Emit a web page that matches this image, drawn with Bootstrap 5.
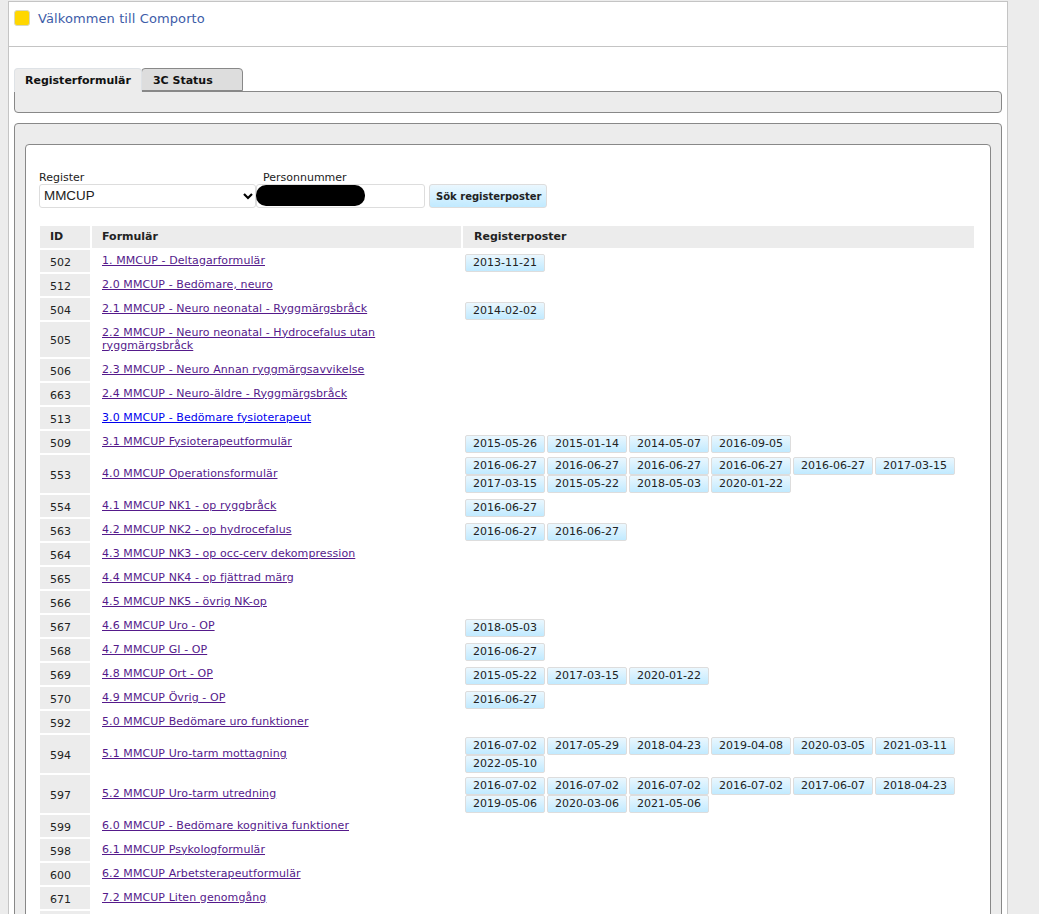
<!DOCTYPE html>
<html lang="sv">
<head>
<meta charset="utf-8">
<title>Comporto</title>
<link href="https://cdn.jsdelivr.net/npm/bootstrap@5.3.0/dist/css/bootstrap.min.css" rel="stylesheet">
<style>
html,body{height:914px;overflow:hidden}
body{background:#ececec;font:11px/13px "DejaVu Sans",Verdana,sans-serif;color:#222}
.sheet{width:1000px;margin-left:8px;background:#fff;border:1px solid #c4c4c4;border-bottom:0;margin-top:1px;height:1200px;padding:0}
.topbar{height:45px;border-bottom:1px solid #c4c4c4;display:flex;gap:8px;padding:8px 5px;color:#3d5ca8;font-size:13px;line-height:18px;letter-spacing:.1px}
.logo-sq{width:16px;height:16px;background:#ffd700;border:1px solid #d8d8c0;border-radius:3px}
.tabrow{margin:21px 5px 0 5px}
.tabrow .nav-link{font-weight:700;font-size:11px;line-height:13px;color:#111;border:1px solid #888;border-radius:4px 4px 0 0;padding:5px 10px;height:23px;background:#ddd;margin:0}
.tabrow .nav-tabs{border:0;gap:0}
.tabrow .nav-link.active{background:#ececec;color:#111;border-bottom-color:#ececec;position:relative;z-index:1;height:24px}
.tabrow .nav-link.other{padding:5px 29px 5px 11px;border-left:1px solid #888;margin-left:-1px}
.tabbody{height:22px;background:#ececec;border:1px solid #888;border-radius:0 4px 4px 4px;margin-top:-1px}
.outer-panel{margin:10px 5px 0 5px;background:#ececec;border:1px solid #888;border-radius:4px;padding:20px 10px;height:1000px}
.inner-panel{background:#fff;border:1px solid #888;border-radius:4px;padding:27px 13px 0 13px;height:960px}
.searchform{display:flex;align-items:flex-end;position:relative;height:36px}
.searchform label{display:block;font-size:11px;line-height:12px;color:#222}
.searchform .form-select{width:217px;height:24px;padding:0 4px;font:13.4px/20px "Liberation Sans",sans-serif;color:#222;border:1px solid #ddd;border-radius:3px;background-image:url("data:image/svg+xml,%3csvg xmlns='http://www.w3.org/2000/svg' viewBox='0 0 10 7'%3e%3cpath fill='none' stroke='%23000' stroke-width='2.2' d='M1 1l4 4 4-4'/%3e%3c/svg%3e");background-position:right 2px center;background-size:10px 7px}
.searchform .form-control{height:24px;padding:0 4px;border:1px solid #ddd;border-radius:3px}
.redact{position:absolute;left:217px;top:13px;width:109px;height:21px;background:#000;border-radius:10px}
.pnr{margin-left:7px}
.pnr .form-control{margin-left:-7px;width:169px}
.btn-find{font-weight:700;font-size:10px;line-height:13px;color:#222;padding:4px 5px 4px 6px;height:24px;border:1px solid #ddd;border-radius:3px;background:linear-gradient(#eaf7fe,#c1eaff);margin-left:4px}
.regtable{width:938px;margin:16px 0 0 -1px;border-collapse:separate;border-spacing:2px;table-layout:fixed}
.regtable th{background:#ececec;font-weight:700;height:22px;padding:0 10px 2px;color:#222;font-size:11px}
.regtable th:last-child{padding-left:11px}
.regtable td{height:22px;padding:0;vertical-align:middle}
.regtable tr.tallrow td{height:35px}
.regtable td.rid{background:#ececec;padding:2px 0 0 10px;color:#222}
.regtable td.rform{padding:0 10px 2px 10px;letter-spacing:.08px}
.regtable td.rdates{padding:2px 2px 0;vertical-align:bottom}
.regtable a{color:#551a8b}
.regtable a.fresh{color:#0000ee}
.datewrap{display:flex;flex-wrap:wrap;column-gap:2px}
.datebtn{display:block;width:80px;height:18px;padding:0;font:11px/16px "DejaVu Sans",Verdana,sans-serif;text-align:center;color:#222;border:1px solid #ddd;border-radius:2px;background:linear-gradient(#eaf7fe,#c1eaff)}
</style>
</head>
<body>
<div class="sheet">
  <div class="topbar"><span class="logo-sq"></span><span>Välkommen till Comporto</span></div>
  <div class="tabrow">
    <ul class="nav nav-tabs">
      <li class="nav-item"><a class="nav-link active" href="#">Registerformulär</a></li>
      <li class="nav-item"><a class="nav-link other" href="#">3C Status</a></li>
    </ul>
    <div class="tabbody"></div>
  </div>
  <div class="outer-panel">
    <div class="inner-panel">
      <form class="searchform">
        <div><label for="reg">Register</label>
          <select id="reg" class="form-select"><option>MMCUP</option></select></div>
        <div class="pnr"><label for="pnr">Personnummer</label>
          <input id="pnr" class="form-control" type="text"></div>
        <span class="redact"></span>
        <button type="button" class="btn btn-find">Sök registerposter</button>
      </form>
      <table class="regtable">
        <colgroup><col style="width:50px"><col style="width:369px"><col></colgroup>
        <thead><tr><th>ID</th><th>Formulär</th><th>Registerposter</th></tr></thead>
        <tbody id="rows"></tbody>
      </table>
    </div>
  </div>
</div>
<script>
var d=[
[502,"1. MMCUP - Deltagarformulär",["2013-11-21"]],
[512,"2.0 MMCUP - Bedömare, neuro",[]],
[504,"2.1 MMCUP - Neuro neonatal - Ryggmärgsbråck",["2014-02-02"]],
[505,"2.2 MMCUP - Neuro neonatal - Hydrocefalus utan ryggmärgsbråck",[],0,1],
[506,"2.3 MMCUP - Neuro Annan ryggmärgsavvikelse",[]],
[663,"2.4 MMCUP - Neuro-äldre - Ryggmärgsbråck",[]],
[513,"3.0 MMCUP - Bedömare fysioterapeut",[],1],
[509,"3.1 MMCUP Fysioterapeutformulär",["2015-05-26","2015-01-14","2014-05-07","2016-09-05"]],
[553,"4.0 MMCUP Operationsformulär",["2016-06-27","2016-06-27","2016-06-27","2016-06-27","2016-06-27","2017-03-15","2017-03-15","2015-05-22","2018-05-03","2020-01-22"]],
[554,"4.1 MMCUP NK1 - op ryggbråck",["2016-06-27"]],
[563,"4.2 MMCUP NK2 - op hydrocefalus",["2016-06-27","2016-06-27"]],
[564,"4.3 MMCUP NK3 - op occ-cerv dekompression",[]],
[565,"4.4 MMCUP NK4 - op fjättrad märg",[]],
[566,"4.5 MMCUP NK5 - övrig NK-op",[]],
[567,"4.6 MMCUP Uro - OP",["2018-05-03"]],
[568,"4.7 MMCUP GI - OP",["2016-06-27"]],
[569,"4.8 MMCUP Ort - OP",["2015-05-22","2017-03-15","2020-01-22"]],
[570,"4.9 MMCUP Övrig - OP",["2016-06-27"]],
[592,"5.0 MMCUP Bedömare uro funktioner",[]],
[594,"5.1 MMCUP Uro-tarm mottagning",["2016-07-02","2017-05-29","2018-04-23","2019-04-08","2020-03-05","2021-03-11","2022-05-10"]],
[597,"5.2 MMCUP Uro-tarm utredning",["2016-07-02","2016-07-02","2016-07-02","2016-07-02","2017-06-07","2018-04-23","2019-05-06","2020-03-06","2021-05-06"]],
[599,"6.0 MMCUP - Bedömare kognitiva funktioner",[]],
[598,"6.1 MMCUP Psykologformulär",[]],
[600,"6.2 MMCUP Arbetsterapeutformulär",[]],
[671,"7.2 MMCUP Liten genomgång",[]]
];
document.getElementById('rows').innerHTML=d.map(function(r){
 return '<tr'+(r[4]?' class="tallrow"':'')+'><td class="rid">'+r[0]+'</td><td class="rform"><a href="#"'+(r[3]?' class="fresh"':'')+'>'+r[1]+'</a></td><td class="rdates"><div class="datewrap">'+r[2].map(function(x){return '<button type="button" class="datebtn">'+x+'</button>'}).join('')+'</div></td></tr>';
}).join('')+'<tr><td class="rid"></td><td></td><td></td></tr>';
</script>
<script src="https://cdn.jsdelivr.net/npm/bootstrap@5.3.0/dist/js/bootstrap.bundle.min.js"></script>
</body>
</html>
